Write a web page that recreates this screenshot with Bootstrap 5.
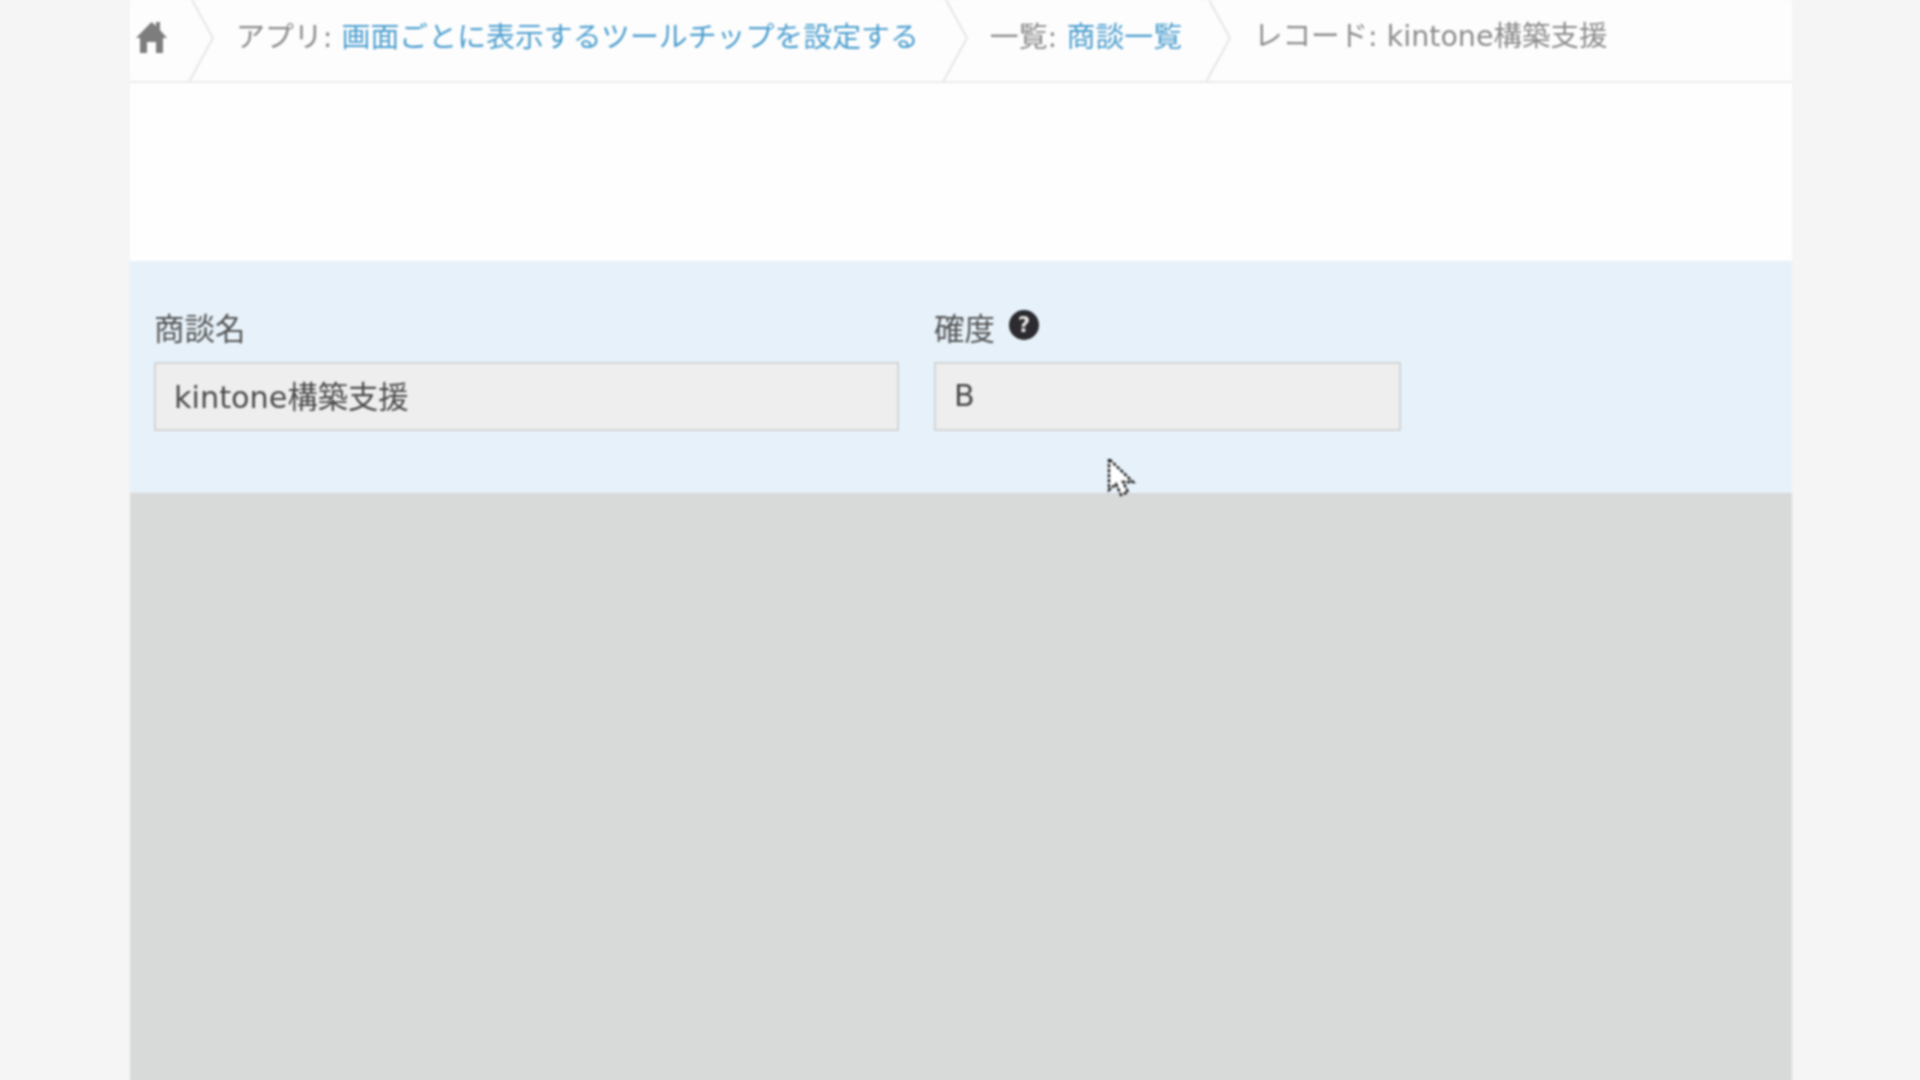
<!DOCTYPE html>
<html lang="ja">
<head>
    <meta charset="UTF-8">
    <meta name="viewport" content="width=device-width, initial-scale=1.0">
    <title>kintone構築支援</title>
    <link href="https://cdn.jsdelivr.net/npm/bootstrap@5.3.0/dist/css/bootstrap.min.css" rel="stylesheet">
    <style>
        html, body { height: 100%; }
        body {
            background: #f5f5f5;
            font-family: "DejaVu Sans", "Noto Sans CJK JP", sans-serif;
            overflow: hidden;
        }
        .page-shell {
            width: 1662px;
            height: 1100px;
            margin-left: 130px;
            background: #d8d9d9;
            filter: blur(0.8px);
        }
        .crumb-bar {
            height: 83px;
            background: #fdfdfd;
            border-bottom: 2px solid #ececec;
            font-size: 28.9px;
            color: #8b8b8b;
            white-space: nowrap;
        }
        .crumb-home { margin: -8px 21px 0 6px; }
        .crumb-sep { flex: none; }
        .crumb-text { margin: -6px 23px 0 21px; }
        .crumb-last { margin-left: 22px; font-size: 28.5px; }
        .crumb-bar a { color: #4d9fcf; text-decoration: none; }
        .white-gap { height: 178px; background: #fefefe; }
        .form-band {
            height: 232px;
            background: #e6f1f9;
            padding: 49px 0 0 24px;
            gap: 35px;
        }
        .field-wide { width: 745px; }
        .field-narrow { width: 467px; }
        .field-label {
            height: 52px;
            font-size: 30.5px;
            line-height: 40px;
            color: #555;
            margin: 0;
            gap: 12px;
        }
        .help-mark {
            width: 30px;
            height: 30px;
            margin-left: 2px;
            background: #2b2b30;
            color: #e8e8e8;
            font: bold 21px/30px "DejaVu Sans", sans-serif;
        }
        .form-control.field-value {
            height: 69px;
            padding: 0 18px 3px;
            border: 2px solid #d3d5d6;
            border-radius: 0;
            background: #eeeeee;
            color: #4a4a4a;
            font-size: 30.3px;
            font-family: inherit;
        }
        .mouse-arrow { left: 977px; top: 458px; }
    </style>
</head>
<body>
    <div class="page-shell position-relative d-flex flex-column">
        <nav class="crumb-bar d-flex align-items-center">
            <svg class="crumb-home" width="31" height="32" viewBox="0 0 31 32">
                <path fill="#7d7d7d" d="M15.5 1 20 5V1h4v8l7 8h-4v15h-7V21h-9v11H4V17H0z"/>
            </svg>
            <svg class="crumb-sep" width="27" height="82" viewBox="0 0 27 82">
                <path fill="none" stroke="#e6e6e6" stroke-width="2" d="M4 0 25 38 1 82"/>
            </svg>
            <span class="crumb-text">アプリ: <a href="#">画面ごとに表示するツールチップを設定する</a></span>
            <svg class="crumb-sep" width="27" height="82" viewBox="0 0 27 82">
                <path fill="none" stroke="#e6e6e6" stroke-width="2" d="M4 0 25 38 1 82"/>
            </svg>
            <span class="crumb-text">一覧: <a href="#">商談一覧</a></span>
            <svg class="crumb-sep" width="27" height="82" viewBox="0 0 27 82">
                <path fill="none" stroke="#e6e6e6" stroke-width="2" d="M4 0 25 38 1 82"/>
            </svg>
            <span class="crumb-text crumb-last">レコード: kintone構築支援</span>
        </nav>
        <div class="white-gap"></div>
        <div class="form-band d-flex">
            <div class="field-wide">
                <label class="field-label d-flex">商談名</label>
                <input class="form-control field-value" type="text" value="kintone構築支援" readonly>
            </div>
            <div class="field-narrow">
                <label class="field-label d-flex">確度 <span class="help-mark rounded-circle text-center">?</span></label>
                <input class="form-control field-value" type="text" value="B" readonly>
            </div>
        </div>
        <svg class="mouse-arrow position-absolute" width="30" height="42" viewBox="0 0 30 42">
            <path fill="#fff" stroke="#1c1c1c" stroke-width="2.4" stroke-dasharray="3.5 1.5" d="M2 1v31l7-6 5 11 7-3-5-10h10z"/>
        </svg>
    </div>

    <script src="https://cdn.jsdelivr.net/npm/bootstrap@5.3.0/dist/js/bootstrap.bundle.min.js"></script>
</body>
</html>
